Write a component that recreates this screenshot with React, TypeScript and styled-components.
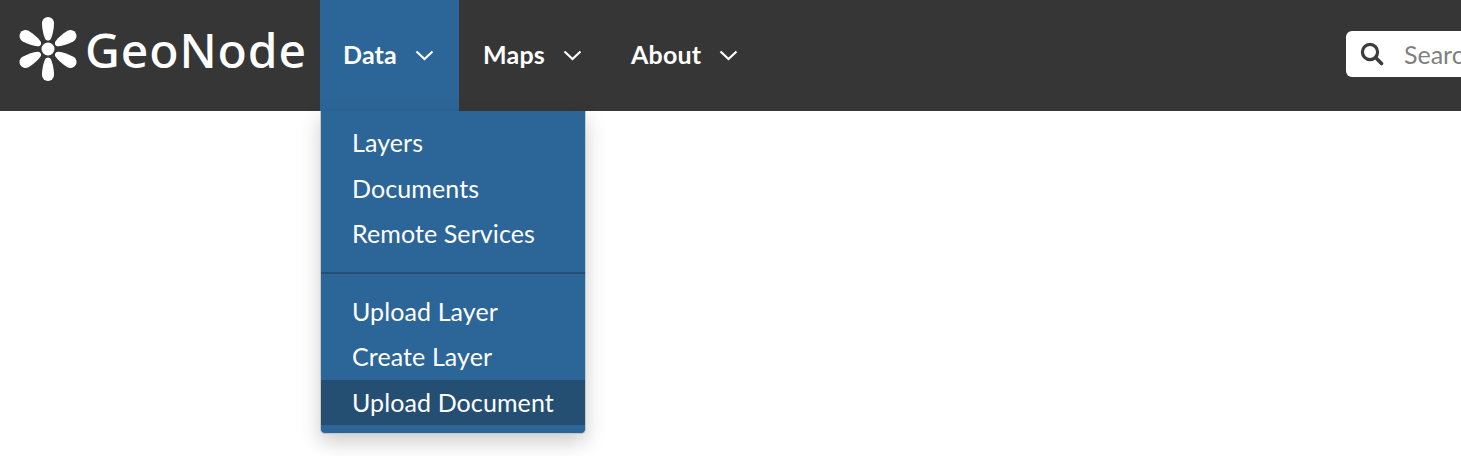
import React from "react";
import styled, { createGlobalStyle } from "styled-components";

const GlobalStyle = createGlobalStyle`
    html, body {
        margin: 0;
        padding: 0;
        background: #fff;
        overflow: hidden;
    }
    body {
        font-family: "Lato", "Liberation Sans", sans-serif;
    }
`;

const navItems = ["Data", "Maps", "About"];
const menuTop = ["Layers", "Documents", "Remote Services"];
const menuBottom = ["Upload Layer", "Create Layer", "Upload Document"];

const petal = "M26 6 A6 6 0 0 1 38 6 C38 12 36.5 18 35 21.5 C33.8 24.2 30.2 24.2 29 21.5 C27.5 18 26 12 26 6Z";

const Chevron = () => (
    <svg width="19" height="11" viewBox="0 0 19 11" fill="none">
        <path d="M1.5 1.5 L9.5 9 L17.5 1.5" stroke="#fff" strokeWidth="2.2" />
    </svg>
);

const SearchIcon = () => (
    <svg width="24" height="24" viewBox="0 0 24 24" fill="none">
        <circle cx="10" cy="10" r="7.6" stroke="#3c3c3c" strokeWidth="3.2" />
        <path d="M15.5 15.5 L21.5 21.5" stroke="#3c3c3c" strokeWidth="3.6" strokeLinecap="round" />
    </svg>
);

const Logo = () => (
    <LogoWrap>
        <svg width="64" height="64" viewBox="0 0 64 64">
            <g fill="#fff">
                <circle cx="32" cy="32" r="6.5" />
                {[0, 60, 120, 180, 240, 300].map((r: number) => (
                    <path key={r} d={petal} transform={`rotate(${r} 32 32)`} />
                ))}
            </g>
        </svg>
        <LogoText>GeoNode</LogoText>
    </LogoWrap>
);

const App = () => {
    return (
        <Page>
            <GlobalStyle />
            <NavBar>
                <Logo />
                <NavList>
                    {navItems.map((i: string, idx: number) => (
                        <NavItem key={idx} $active={i === "Data"}>
                            <NavLabel>{i}</NavLabel>
                            <Chevron />
                            {i === "Data" && (
                                <DropMenu>
                                    {menuTop.map((m: string) => (
                                        <MenuRow key={m}>{m}</MenuRow>
                                    ))}
                                    <Divider />
                                    {menuBottom.map((m: string) => (
                                        <MenuRow key={m} $hover={m === "Upload Document"}>{m}</MenuRow>
                                    ))}
                                </DropMenu>
                            )}
                        </NavItem>
                    ))}
                </NavList>
                <SearchBox>
                    <SearchIcon />
                    <SearchText>Search</SearchText>
                </SearchBox>
            </NavBar>
        </Page>
    );
};
export default App;

const Page = styled.div`
    width: 1461px;
    height: 456px;
    overflow: hidden;
    background: #fff;
`;

const NavBar = styled.div`
    display: flex;
    align-items: stretch;
    height: 111px;
    background: #363636;
`;

const LogoWrap = styled.div`
    display: flex;
    align-items: center;
    gap: 5px;
    width: 320px;
    padding: 0 0 13px 16px;
    box-sizing: border-box;
    flex-shrink: 0;

    svg {
        flex-shrink: 0;
    }
`;

const LogoText = styled.span`
    margin-top: 2px;
    font-family: "Noto Sans", sans-serif;
    font-size: 48px;
    font-weight: 500;
    line-height: 1;
    color: #fff;
    letter-spacing: 0.9px;
`;

const NavList = styled.div`
    display: flex;
    align-items: stretch;
`;

const NavItem = styled.div<{ $active?: boolean }>`
    position: relative;
    display: flex;
    align-items: center;
    gap: 18px;
    padding: 0 25px 0 ${({ $active }) => ($active ? "23px" : "24px")};
    background: ${({ $active }) => ($active ? "#2c6699" : "transparent")};
    color: #fff;
    font-size: 25px;
    font-weight: 700;
    letter-spacing: 0.2px;
`;

const NavLabel = styled.span`
    margin-bottom: 4px;
`;

const DropMenu = styled.div`
    position: absolute;
    left: 0;
    top: 111px;
    display: flex;
    flex-direction: column;
    width: 266px;
    padding: 9px 0 8px;
    box-sizing: border-box;
    background: #2c6699;
    border-bottom: 1px solid #c8c8c8;
    border-left: 1px solid #c8c8c8;
    border-right: 1px solid #c8c8c8;
    border-radius: 0 0 5px 5px;
    box-shadow: 0 8px 20px rgba(0, 0, 0, 0.2);
    font-weight: 400;
    letter-spacing: 0.1px;
`;

const MenuRow = styled.div<{ $hover?: boolean }>`
    height: 45.5px;
    line-height: 45px;
    padding-left: 31px;
    font-size: 25px;
    color: #fff;
    background: ${({ $hover }) => ($hover ? "#244f73" : "transparent")};
`;

const Divider = styled.div`
    height: 2px;
    margin: 15px 0;
    background: #244f73;
`;

const SearchBox = styled.div`
    display: flex;
    align-items: center;
    gap: 20px;
    margin: 31px 0 34px auto;
    width: 115px;
    flex-shrink: 0;
    padding-left: 14px;
    box-sizing: border-box;
    overflow: hidden;
    background: #fff;
    border-radius: 6px 0 0 6px;

    svg {
        flex-shrink: 0;
    }
`;

const SearchText = styled.span`
    font-size: 25px;
    color: #808080;
    white-space: nowrap;
`;
